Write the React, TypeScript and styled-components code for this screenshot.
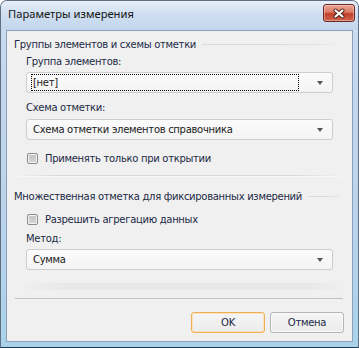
import React from 'react';
import styled, {createGlobalStyle} from 'styled-components';

const GlobalStyle = createGlobalStyle`
  html, body {
    margin: 0;
    padding: 0;
    background: #ffffff;
  }
  * {
    box-sizing: border-box;
  }
`

const Window = styled.div`
  width: 359px;
  height: 348px;
  display: flex;
  flex-direction: column;
  border: 1px solid #5f6f84;
  border-bottom-color: #1d3a52;
  border-radius: 7px 7px 0 0;
  background: linear-gradient(to bottom, #dde8f4 0%, #c6d9ee 12%, #bcd3ec 60%, #a9d3ea 100%);
  overflow: hidden;
  font-family: "DejaVu Sans", sans-serif;
  font-size: 10px;
  letter-spacing: -0.3px;
  color: #1b2a45;
`

const TitleBar = styled.div`
  height: 29px;
  display: flex;
  align-items: flex-start;
  justify-content: space-between;
  padding: 0 3px 0 7px;
  background: linear-gradient(to bottom, #e6eef8 0%, #cfdff0 45%, #c3d7ee 100%);
`

const Title = styled.span`
  margin-top: 5px;
  font-family: "Noto Sans", sans-serif;
  font-size: 11.2px;
  letter-spacing: 0;
  color: #151515;
  line-height: 16px;
`

const CloseButton = styled.div`
  margin-top: 3px;
  width: 32px;
  height: 18px;
  display: flex;
  align-items: center;
  justify-content: center;
  border: 1px solid #6e2a22;
  border-radius: 3px;
  background: linear-gradient(to bottom, #eba595 0%, #d97a66 45%, #c23e2a 55%, #cf6650 100%);
  box-shadow: inset 0 0 0 1px rgba(255, 255, 255, 0.35);
`

const Client = styled.div`
  flex: 1;
  margin: 0 5px 5px 5px;
  border: 1px solid #8aa0bb;
  background: #f0f0f0;
  display: flex;
  flex-direction: column;
  padding-top: 5px;
`

const GroupHeader = styled.div<{ $mt?: number }>`
  display: flex;
  align-items: center;
  height: 16px;
  margin-top: ${props => props.$mt || 0}px;
  padding: 0 11px 0 7px;
  white-space: nowrap;

  &::after {
    content: '';
    flex: 1;
    height: 1px;
    margin-left: 6px;
    background: linear-gradient(to right, #d6d9dd 0%, #dcdfe2 80%, rgba(220, 223, 226, 0) 100%);
  }
`

const Field = styled.div<{ $mt?: number }>`
  margin-top: ${props => props.$mt || 0}px;
  padding: 0 19px 0 19px;
`

const Label = styled.div`
  height: 16px;
  line-height: 16px;
  white-space: nowrap;
`

const Combo = styled.div<{ $mt?: number }>`
  margin-top: ${props => props.$mt || 0}px;
  height: 21px;
  display: flex;
  align-items: center;
  justify-content: space-between;
  padding: 0 9px 0 4px;
  border: 1px solid #cdcdcd;
  border-radius: 3px;
  background: linear-gradient(to bottom, #fbfbfb 0%, #f4f4f4 100%);
  color: #1a1a1a;
`

const ComboText = styled.span<{ $focused?: boolean }>`
  flex: ${props => props.$focused ? 1 : 'none'};
  margin-right: ${props => props.$focused ? 18 : 0}px;
  height: 17px;
  line-height: 15px;
  padding-left: 1px;
  border: 1px ${props => props.$focused ? 'dotted #000' : 'solid transparent'};
`

const Arrow = styled.span`
  width: 0;
  height: 0;
  border-left: 3.5px solid transparent;
  border-right: 3.5px solid transparent;
  border-top: 4px solid #555;
`

const CheckRow = styled.label<{ $mt?: number }>`
  margin-top: ${props => props.$mt || 0}px;
  padding-left: 20px;
  height: 16px;
  display: flex;
  align-items: center;
  gap: 7px;
  white-space: nowrap;
`

const Box = styled.span`
  width: 11px;
  height: 11px;
  border: 1px solid #8b8b8b;
  border-radius: 2px;
  background: linear-gradient(to bottom, #c4c4c4, #d6d6d6);
  box-shadow: inset 0 0 0 1px #f3f3f3;
`

const FadeLine = styled.div<{ $mt?: number }>`
  margin: ${props => props.$mt || 0}px 12px 0 12px;
  height: 2px;
  background: linear-gradient(to right, rgba(214, 214, 214, 0) 0%, #d8d8d8 12%, #d8d8d8 85%, rgba(214, 214, 214, 0) 100%);
  border-bottom: 1px solid #f7f7f7;
`

const FadeBand = styled.div<{ $mt?: number }>`
  margin: ${props => props.$mt || 0}px 6px 0 12px;
  height: 7px;
  background: linear-gradient(to right, rgba(230, 230, 230, 0) 0%, #e8e8e8 15%, #e8e8e8 88%, rgba(230, 230, 230, 0) 100%);
`

const SolidLine = styled.div<{ $mt?: number }>`
  margin: ${props => props.$mt || 0}px 9px 0 8px;
  height: 1px;
  background: #c2c2c2;
`

const Buttons = styled.div<{ $mt?: number }>`
  margin-top: ${props => props.$mt || 0}px;
  display: flex;
  justify-content: flex-end;
  gap: 5px;
  padding-right: 8px;
`

const Button = styled.div<{ $default?: boolean }>`
  width: 74px;
  height: 21px;
  display: flex;
  align-items: center;
  justify-content: center;
  border: 1px solid ${props => props.$default ? '#f0ad55' : '#b4b4b4'};
  border-radius: 3px;
  background: linear-gradient(to bottom, #f5f5f5 0%, #ececec 100%);
  box-shadow: inset 0 0 0 1px ${props => props.$default ? '#fbe3bd' : '#fafafa'};
  color: #1b2a45;
`

export default function App() {
    return (
        <>
            <GlobalStyle/>
            <Window>
                <TitleBar>
                    <Title>Параметры измерения</Title>
                    <CloseButton>
                        <svg width="14" height="11" viewBox="0 0 14 11">
                            <path d="M3.5 2.5 L10.5 8.5 M10.5 2.5 L3.5 8.5" stroke="#4a1d16" strokeWidth="4" strokeLinecap="round"/>
                            <path d="M3.5 2.5 L10.5 8.5 M10.5 2.5 L3.5 8.5" stroke="#ffffff" strokeWidth="2.2" strokeLinecap="round"/>
                        </svg>
                    </CloseButton>
                </TitleBar>
                <Client>
                    <GroupHeader>Группы элементов и схемы отметки</GroupHeader>
                    <Field $mt={2}>
                        <Label>Группа элементов:</Label>
                        <Combo $mt={2}>
                            <ComboText $focused>[нет]</ComboText>
                            <Arrow/>
                        </Combo>
                    </Field>
                    <Field $mt={7}>
                        <Label>Схема отметки:</Label>
                        <Combo $mt={3}>
                            <ComboText>Схема отметки элементов справочника</ComboText>
                            <Arrow/>
                        </Combo>
                    </Field>
                    <CheckRow $mt={10}>
                        <Box/>
                        Применять только при открытии
                    </CheckRow>
                    <FadeLine $mt={9}/>
                    <GroupHeader $mt={11}>Множественная отметка для фиксированных измерений</GroupHeader>
                    <CheckRow $mt={7}>
                        <Box/>
                        Разрешить агрегацию данных
                    </CheckRow>
                    <Field $mt={4}>
                        <Label>Метод:</Label>
                        <Combo $mt={2}>
                            <ComboText>Сумма</ComboText>
                            <Arrow/>
                        </Combo>
                    </Field>
                    <FadeBand $mt={13}/>
                    <SolidLine $mt={8}/>
                    <Buttons $mt={13}>
                        <Button $default>OK</Button>
                        <Button>Отмена</Button>
                    </Buttons>
                </Client>
            </Window>
        </>
    );
}
